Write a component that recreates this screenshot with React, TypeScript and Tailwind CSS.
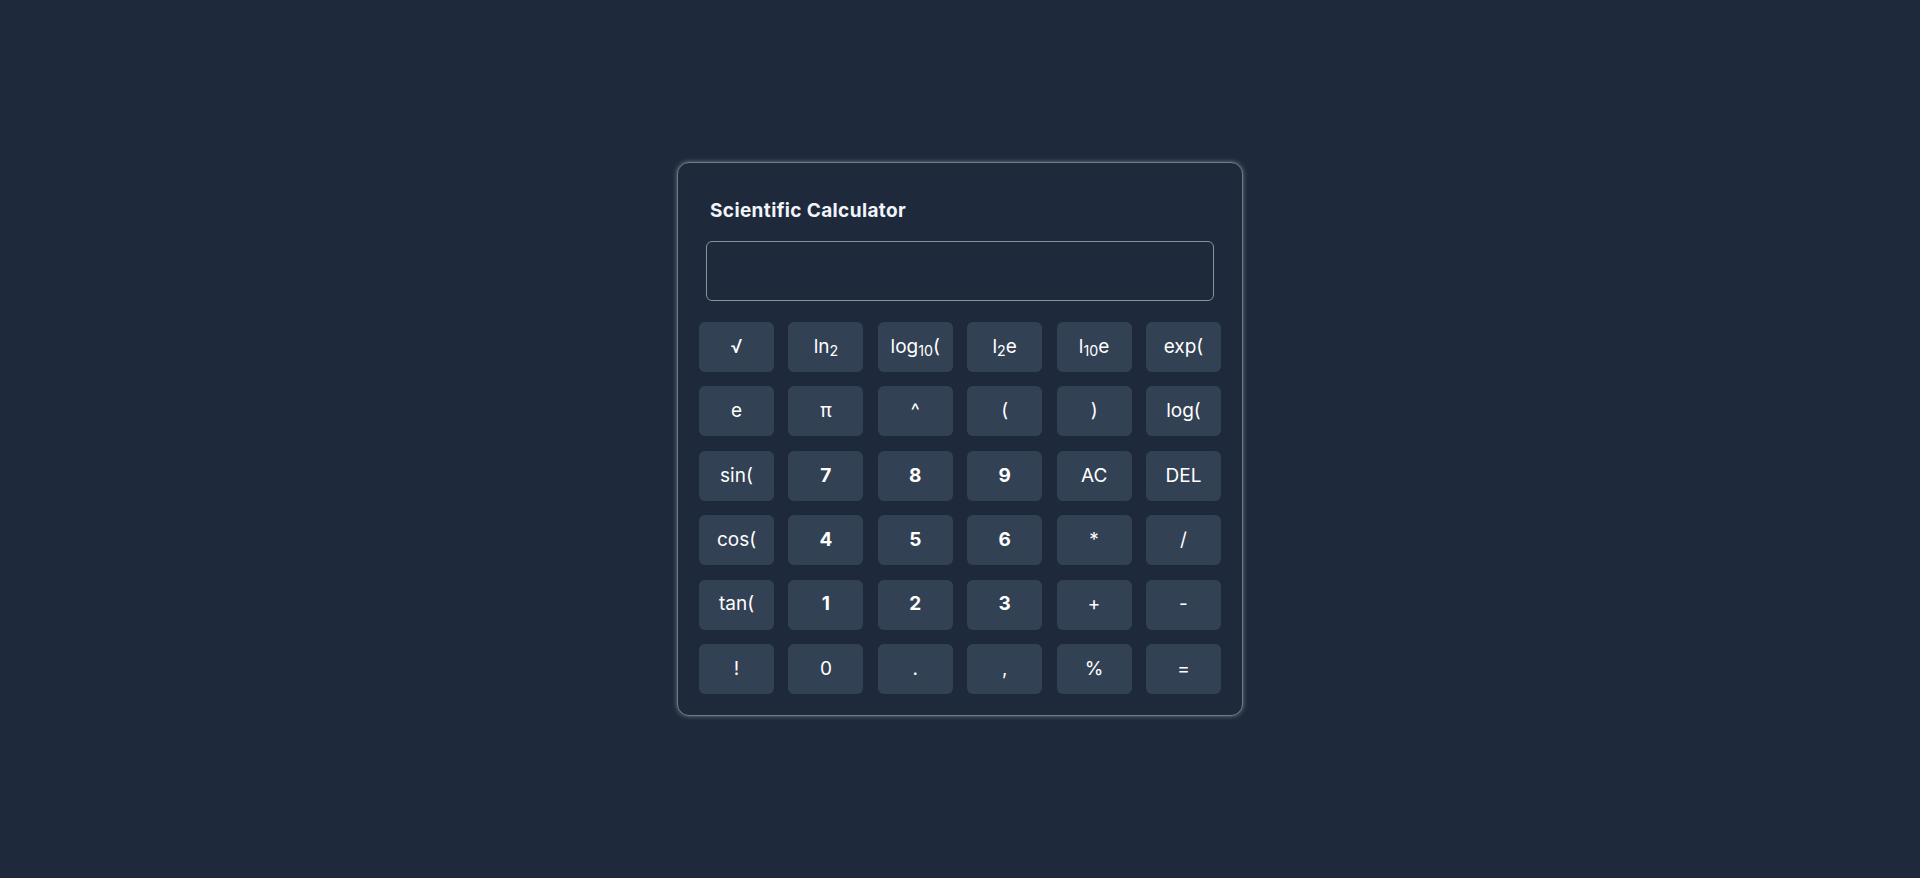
import React, { useState } from 'react';

type Key = { label: React.ReactNode; value: string; bold?: boolean };

const keys: Key[] = [
  { label: '√', value: 'sqrt(' },
  { label: <>ln<sub>2</sub></>, value: 'LN2' },
  { label: <>log<sub>10</sub>(</>, value: 'log10(' },
  { label: <>l<sub>2</sub>e</>, value: 'LOG2E' },
  { label: <>l<sub>10</sub>e</>, value: 'LOG10E' },
  { label: 'exp(', value: 'exp(' },
  { label: 'e', value: 'e' },
  { label: 'π', value: 'π' },
  { label: '^', value: '^' },
  { label: '(', value: '(' },
  { label: ')', value: ')' },
  { label: 'log(', value: 'log(' },
  { label: 'sin(', value: 'sin(' },
  { label: '7', value: '7', bold: true },
  { label: '8', value: '8', bold: true },
  { label: '9', value: '9', bold: true },
  { label: 'AC', value: 'AC' },
  { label: 'DEL', value: 'DEL' },
  { label: 'cos(', value: 'cos(' },
  { label: '4', value: '4', bold: true },
  { label: '5', value: '5', bold: true },
  { label: '6', value: '6', bold: true },
  { label: '*', value: '*' },
  { label: '/', value: '/' },
  { label: 'tan(', value: 'tan(' },
  { label: '1', value: '1', bold: true },
  { label: '2', value: '2', bold: true },
  { label: '3', value: '3', bold: true },
  { label: '+', value: '+' },
  { label: '-', value: '-' },
  { label: '!', value: '!' },
  { label: '0', value: '0' },
  { label: '.', value: '.' },
  { label: ',', value: ',' },
  { label: '%', value: '%' },
  { label: '=', value: '=' },
];

export default function App() {
  const [display, setDisplay] = useState('');

  const press = (value: string) => {
    if (value === 'AC') return setDisplay('');
    if (value === 'DEL') return setDisplay((prev) => prev.slice(0, -1));
    if (value === '=') return;
    setDisplay((prev) => prev + value);
  };

  return (
    <div className="min-h-screen bg-[#1e293b] flex items-center justify-center font-['Inter',sans-serif]">
      <div className="w-[566px] p-[21px] rounded-[12px] border border-[#737b87] bg-[#1e293b] shadow-[0_0_5px_rgba(210,215,225,0.45)]">
        <h2 className="mt-[13px] mb-[16px] ml-[11px] text-[19px] leading-[28px] font-bold tracking-[0.02em] text-[#f1f5f9]">
          Scientific Calculator
        </h2>

        <input
          type="text"
          value={display}
          readOnly
          className="block mx-[7px] w-[508px] h-[60px] px-3 rounded-[6px] border border-[#8b9099] bg-transparent text-white text-xl outline-none"
        />

        <div className="mt-[21px] grid grid-cols-6 gap-x-[14.4px] gap-y-[14.4px]">
          {keys.map((k) => (
            <button
              key={k.value}
              type="button"
              onClick={() => press(k.value)}
              className={`h-[50px] rounded-[6px] bg-[#334155] text-white text-[19px] ${
                k.bold ? 'font-bold' : 'font-normal'
              }`}
            >
              {k.label}
            </button>
          ))}
        </div>
      </div>
    </div>
  );
}
